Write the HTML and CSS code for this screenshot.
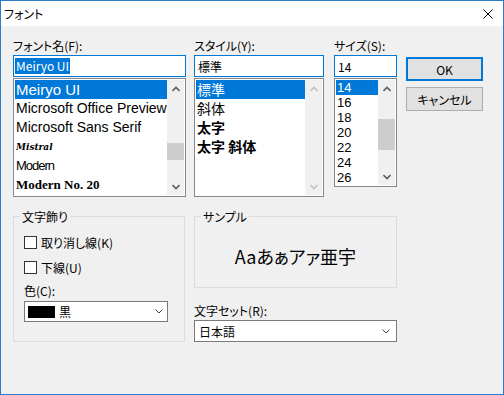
FILE: index.html
```html
<!DOCTYPE html>
<html lang="ja">
<head>
  <meta charset="UTF-8" />
  <meta name="viewport" content="width=device-width, initial-scale=1.0"/>
  <title>フォント</title>
  <link rel="stylesheet" href="styles.css">
</head>
<body>
  <div class="window">
    <!-- Title bar -->
    <div class="titlebar">
      <span class="title">フォント</span>
      <svg class="close" width="10" height="10" viewBox="0 0 10 10">
        <path d="M0.5 0.5L9.5 9.5M9.5 0.5L0.5 9.5" stroke="#000" stroke-width="1" fill="none"/>
      </svg>
    </div>

    <div class="dialog">
      <!-- Font / style / size pickers -->
      <div class="top">
        <div class="field field-font">
          <div class="caption">フォント名(F):</div>
          <div class="edit"><span class="selected-text">Meiryo UI</span></div>
          <div class="listbox">
            <ul class="items">
              <li class="item sel f-meiryo">Meiryo UI</li>
              <li class="item f-ms">Microsoft Office Preview</li>
              <li class="item f-ms">Microsoft Sans Serif</li>
              <li class="item f-mistral">Mistral</li>
              <li class="item f-modern">Modern</li>
              <li class="item f-modern20">Modern No. 20</li>
            </ul>
            <div class="scrollbar">
              <div class="arrow">
                <svg width="8" height="6" viewBox="0 0 8 6"><polyline points="0.5,5 4,1.5 7.5,5" /></svg>
              </div>
              <div class="track"><div class="thumb thumb-font"></div></div>
              <div class="arrow">
                <svg width="8" height="6" viewBox="0 0 8 6"><polyline points="0.5,1 4,4.5 7.5,1" /></svg>
              </div>
            </div>
          </div>
        </div>

        <div class="field field-style">
          <div class="caption">スタイル(Y):</div>
          <div class="edit">標準</div>
          <div class="listbox">
            <ul class="items items-style">
              <li class="item sel">標準</li>
              <li class="item">斜体</li>
              <li class="item bold">太字</li>
              <li class="item bold">太字 斜体</li>
            </ul>
            <div class="scrollbar disabled">
              <div class="arrow">
                <svg width="8" height="6" viewBox="0 0 8 6"><polyline points="0.5,5 4,1.5 7.5,5" /></svg>
              </div>
              <div class="track"></div>
              <div class="arrow">
                <svg width="8" height="6" viewBox="0 0 8 6"><polyline points="0.5,1 4,4.5 7.5,1" /></svg>
              </div>
            </div>
          </div>
        </div>

        <div class="field field-size">
          <div class="caption">サイズ(S):</div>
          <div class="edit">14</div>
          <div class="listbox listbox-size">
            <ul class="items items-size">
              <li class="item sel">14</li>
              <li class="item">16</li>
              <li class="item">18</li>
              <li class="item">20</li>
              <li class="item">22</li>
              <li class="item">24</li>
              <li class="item">26</li>
            </ul>
            <div class="scrollbar">
              <div class="arrow">
                <svg width="8" height="6" viewBox="0 0 8 6"><polyline points="0.5,5 4,1.5 7.5,5" /></svg>
              </div>
              <div class="track"><div class="thumb thumb-size"></div></div>
              <div class="arrow">
                <svg width="8" height="6" viewBox="0 0 8 6"><polyline points="0.5,1 4,4.5 7.5,1" /></svg>
              </div>
            </div>
          </div>
        </div>

        <div class="buttons">
          <button class="btn btn-default">OK</button>
          <button class="btn">キャンセル</button>
        </div>
      </div>

      <!-- Effects, sample and charset -->
      <div class="bottom">
        <fieldset class="group group-effects">
          <legend>文字飾り</legend>
          <div class="group-body">
            <div class="check-row"><span class="checkbox"></span>取り消し線(K)</div>
            <div class="check-row"><span class="checkbox"></span>下線(U)</div>
            <div class="caption caption-color">色(C):</div>
            <div class="combo combo-color">
              <span class="swatch"></span>
              <span>黒</span>
              <svg class="chevron" width="8" height="5" viewBox="0 0 8 5"><polyline points="0.5,0.5 4,4 7.5,0.5" /></svg>
            </div>
          </div>
        </fieldset>

        <div class="col-right">
          <fieldset class="group group-sample">
            <legend>サンプル</legend>
            <div class="sample">Aaあぁアァ亜宇</div>
          </fieldset>
          <div class="caption caption-charset">文字セット(R):</div>
          <div class="combo combo-charset">
            <span>日本語</span>
            <svg class="chevron" width="8" height="5" viewBox="0 0 8 5"><polyline points="0.5,0.5 4,4 7.5,0.5" /></svg>
          </div>
        </div>
      </div>
    </div>
  </div>
</body>
</html>
```

FILE: styles.css
```css
* {
  box-sizing: border-box;
}

body {
  margin: 0;
  font-family: "Noto Sans CJK JP", sans-serif;
  font-size: 12px;
  font-feature-settings: "palt";
  color: #000;
}

.window {
  width: 504px;
  height: 395px;
  border: 1px solid #2d7cc5;
  background: #f0f0f0;
}

.titlebar {
  height: 25px;
  background: #fff;
  display: flex;
  align-items: center;
  justify-content: space-between;
  padding: 0 10px 0 3px;
}

.dialog {
  padding: 12px 0 0 12px;
}

.top {
  display: flex;
  align-items: flex-start;
}

.caption {
  height: 15px;
  line-height: 15px;
  margin-bottom: 2px;
  white-space: nowrap;
}

.field-font { width: 173px; margin-right: 8px; }
.field-style { width: 130px; margin-right: 10px; }
.field-size { width: 63px; margin-right: 9px; }

.edit {
  height: 22px;
  border: 1px solid #0078d7;
  background: #fff;
  padding: 0 3px;
  margin-bottom: 1px;
  display: flex;
  align-items: center;
}

.field-font .edit {
  padding-left: 1px;
}

.selected-text {
  background: #0078d7;
  color: #fff;
  line-height: 16px;
  padding: 0 1px;
}

.listbox {
  height: 119px;
  border: 1px solid #828790;
  background: #fff;
  padding: 1px;
  display: flex;
}

.listbox-size {
  height: 109px;
}

.items {
  list-style: none;
  margin: 0;
  padding: 0;
  flex: 1;
  overflow: hidden;
}

.item {
  height: 19px;
  line-height: 19px;
  padding-left: 1px;
  white-space: nowrap;
}

.item.sel {
  background: #0078d7;
  color: #fff;
}

.f-meiryo { font-family: "Liberation Sans", sans-serif; font-size: 15px; }
.f-ms { font-family: "Liberation Sans", sans-serif; font-size: 14px; }
.f-mistral { font-family: "DejaVu Serif", serif; font-size: 10px; font-style: italic; font-weight: bold; font-stretch: condensed; }
.f-modern { font-family: "Liberation Sans", sans-serif; font-size: 13px; letter-spacing: -1px; }
.f-modern20 { font-family: "Liberation Serif", serif; font-size: 13px; font-weight: bold; }

.items-style .item {
  font-size: 14px;
}

.items-style .bold {
  font-weight: bold;
}

.items-size .item {
  height: 15px;
  line-height: 15px;
  font-family: "Liberation Sans", sans-serif;
  font-size: 13px;
}

.scrollbar {
  width: 17px;
  background: #f0f0f0;
  display: flex;
  flex-direction: column;
}

.arrow {
  height: 17px;
  display: flex;
  align-items: center;
  justify-content: center;
}

.arrow polyline {
  fill: none;
  stroke: #606060;
  stroke-width: 1.6;
}

.scrollbar.disabled .arrow polyline {
  stroke: #c4c4c4;
}

.track {
  flex: 1;
}

.thumb {
  background: #cdcdcd;
}

.thumb-font { height: 17px; margin-top: 46px; }
.thumb-size { height: 31px; margin-top: 22px; }

.buttons {
  width: 77px;
  margin-top: 19px;
  display: flex;
  flex-direction: column;
  gap: 6px;
}

.btn {
  height: 24px;
  padding: 0;
  font: inherit;
  color: #000;
  background: #e1e1e1;
  border: 1px solid #adadad;
}

.btn-default {
  border: 2px solid #0078d7;
}

.bottom {
  display: flex;
  align-items: flex-start;
  margin-top: 12px;
}

.group {
  margin: 0;
  padding: 0;
  min-width: 0;
  border: 1px solid #dcdcdc;
}

.group legend {
  margin-left: 6px;
  padding: 0 2px;
  line-height: 15px;
}

.group-effects {
  width: 172px;
  height: 133px;
}

.group-body {
  padding: 8px 0 0 10px;
}

.check-row {
  height: 20px;
  display: flex;
  align-items: center;
  margin-bottom: 5px;
}

.checkbox {
  width: 13px;
  height: 13px;
  border: 1px solid #333;
  background: #fff;
  margin-right: 4px;
}

.caption-color {
  margin-top: 6px;
  margin-bottom: 3px;
}

.combo {
  background: #fff;
  border: 1px solid #7a7a7a;
  display: flex;
  align-items: center;
}

.chevron {
  margin-left: auto;
}

.chevron polyline {
  fill: none;
  stroke: #444;
  stroke-width: 1;
}

.combo-color {
  width: 144px;
  height: 21px;
  padding: 0 4px 0 3px;
}

.swatch {
  width: 27px;
  height: 12px;
  background: #000;
  margin-right: 4px;
}

.col-right {
  width: 203px;
  margin-left: 9px;
}

.group-sample {
  height: 79px;
}

.sample {
  height: 63px;
  display: flex;
  align-items: center;
  justify-content: center;
  font-size: 18px;
}

.caption-charset {
  margin-top: 15px;
}

.combo-charset {
  height: 22px;
  padding: 0 6px 0 4px;
}
```
